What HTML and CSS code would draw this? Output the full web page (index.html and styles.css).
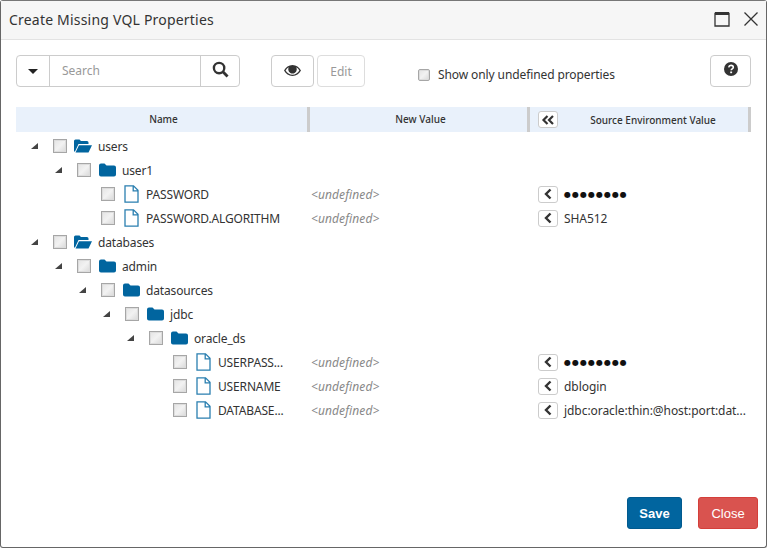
FILE: index.html
```html
<!DOCTYPE html>
<html lang="en">
<head>
  <meta charset="UTF-8">
  <title>Create Missing VQL Properties</title>
  <link rel="stylesheet" href="styles.css">
</head>
<body>
  <svg class="defs" width="0" height="0">
    <symbol id="open" viewBox="0 0 18 14">
      <path d="M0 2a1.500 1.500 0 0 1 1.500-1.500h4l1.500 1.500h6a1.500 1.500 0 0 1 1.500 1.500v1.500h-10l-3.500 7.500h-1z"/>
      <path d="M5 6.300h13l-3.500 7.200h-13z"/>
    </symbol>
    <symbol id="closed" viewBox="0 0 17 14">
      <path d="M0 2.500a2 2 0 0 1 2-2h3.500l2 2h7.500a2 2 0 0 1 2 2v7a2 2 0 0 1-2 2h-13a2 2 0 0 1-2-2z"/>
    </symbol>
    <symbol id="file" viewBox="0 0 15 18">
      <path d="M1 .8h8.500l4.500 4.500v11.900h-13zM9.200 .8v5h4.800" fill="none" stroke="currentColor" stroke-width="1.300"/>
    </symbol>
    <symbol id="left" viewBox="0 0 10 12">
      <path d="M7.500 1.500l-4.500 4.500 4.500 4.500" fill="none" stroke="currentColor" stroke-width="2.400"/>
    </symbol>
  </svg>

  <div class="dialog">
    <header class="titlebar">
      <span class="title">Create Missing VQL Properties</span>
      <span class="window-btns">
        <svg width="16" height="16" viewBox="0 0 16 16"><path d="M1 2.500h14v12.500h-14z" fill="none" stroke="#333" stroke-width="1.300"/><path d="M1 1h14v3h-14z" fill="#333"/></svg>
        <svg width="16" height="16" viewBox="0 0 16 16"><path d="M1.500 1.500l13 13M14.500 1.500l-13 13" stroke="#333" stroke-width="1.300"/></svg>
      </span>
    </header>

    <div class="toolbar">
      <div class="search">
        <button class="search-menu"><span class="caret"></span></button>
        <span class="search-input">Search</span>
        <button class="search-go">
          <svg width="17" height="17" viewBox="0 0 18 18"><circle cx="7.500" cy="7.500" r="5.500" fill="none" stroke="#333" stroke-width="2.500"/><path d="M11.500 11.500l5 5" stroke="#333" stroke-width="3"/></svg>
        </button>
      </div>
      <button class="btn btn-eye">
        <svg width="17" height="11" viewBox="0 0 18 12" preserveAspectRatio="none"><path d="M0 6c2-3.500 5-6 9-6s7 2.500 9 6c-2 3.500-5 6-9 6s-7-2.500-9-6zM1.700 6c1.700 2.700 4.200 4.700 7.300 4.700s5.600-2 7.300-4.700c-.9-1.500-2-2.700-3.400-3.500a4.500 4.500 0 1 1-7.800 0c-1.400.8-2.500 2-3.400 3.500z" fill="#333" fill-rule="evenodd"/><circle cx="9" cy="5" r="3.500" fill="#333"/></svg>
      </button>
      <button class="btn btn-edit">Edit</button>
      <label class="only-undefined"><span class="check small"></span>Show only undefined properties</label>
      <button class="btn btn-help">
        <svg width="14" height="14" viewBox="0 0 14 14"><circle cx="7" cy="7" r="7" fill="#333"/><path d="M4.700 5.300c.2-1.300 1.200-1.900 2.300-1.900 1.300 0 2.300.8 2.300 1.900 0 1.700-2.100 1.500-2.100 3" fill="none" stroke="#fff" stroke-width="1.600"/><path d="M6.200 9.500h1.900v1.700h-1.900z" fill="#fff"/></svg>
      </button>
    </div>

    <div class="grid-head">
      <div class="col-name">Name</div>
      <div class="col-new">New Value</div>
      <div class="col-source">
        <button class="copy-all">
          <svg width="14" height="10" viewBox="0 0 14 10"><path d="M6.500 1l-4 4 4 4M12 1l-4 4 4 4" fill="none" stroke="#333" stroke-width="2.200"/></svg>
        </button>
        <span class="source-label">Source Environment Value</span>
      </div>
    </div>

    <div class="tree">
      <div class="row depth-0">
        <div class="node"><span class="arrow"></span><span class="check"></span><svg class="folder-open"><use href="#open"/></svg><span class="label">users</span></div>
      </div>
      <div class="row depth-1">
        <div class="node"><span class="arrow"></span><span class="check"></span><svg class="folder"><use href="#closed"/></svg><span class="label">user1</span></div>
      </div>
      <div class="row depth-2">
        <div class="node leaf"><span class="check"></span><svg class="doc"><use href="#file"/></svg><span class="label">PASSWORD</span></div>
        <div class="undefined">&lt;undefined&gt;</div>
        <div class="source"><button class="copy"><svg class="chev"><use href="#left"/></svg></button><span class="secret">●●●●●●●●</span></div>
      </div>
      <div class="row depth-2">
        <div class="node leaf"><span class="check"></span><svg class="doc"><use href="#file"/></svg><span class="label">PASSWORD.ALGORITHM</span></div>
        <div class="undefined">&lt;undefined&gt;</div>
        <div class="source"><button class="copy"><svg class="chev"><use href="#left"/></svg></button><span class="value">SHA512</span></div>
      </div>
      <div class="row depth-0">
        <div class="node"><span class="arrow"></span><span class="check"></span><svg class="folder-open"><use href="#open"/></svg><span class="label">databases</span></div>
      </div>
      <div class="row depth-1">
        <div class="node"><span class="arrow"></span><span class="check"></span><svg class="folder"><use href="#closed"/></svg><span class="label">admin</span></div>
      </div>
      <div class="row depth-2">
        <div class="node"><span class="arrow"></span><span class="check"></span><svg class="folder"><use href="#closed"/></svg><span class="label">datasources</span></div>
      </div>
      <div class="row depth-3">
        <div class="node"><span class="arrow"></span><span class="check"></span><svg class="folder"><use href="#closed"/></svg><span class="label">jdbc</span></div>
      </div>
      <div class="row depth-4">
        <div class="node"><span class="arrow"></span><span class="check"></span><svg class="folder"><use href="#closed"/></svg><span class="label">oracle_ds</span></div>
      </div>
      <div class="row depth-5">
        <div class="node leaf"><span class="check"></span><svg class="doc"><use href="#file"/></svg><span class="label">USERPASS...</span></div>
        <div class="undefined">&lt;undefined&gt;</div>
        <div class="source"><button class="copy"><svg class="chev"><use href="#left"/></svg></button><span class="secret">●●●●●●●●</span></div>
      </div>
      <div class="row depth-5">
        <div class="node leaf"><span class="check"></span><svg class="doc"><use href="#file"/></svg><span class="label">USERNAME</span></div>
        <div class="undefined">&lt;undefined&gt;</div>
        <div class="source"><button class="copy"><svg class="chev"><use href="#left"/></svg></button><span class="value">dblogin</span></div>
      </div>
      <div class="row depth-5">
        <div class="node leaf"><span class="check"></span><svg class="doc"><use href="#file"/></svg><span class="label">DATABASE...</span></div>
        <div class="undefined">&lt;undefined&gt;</div>
        <div class="source"><button class="copy"><svg class="chev"><use href="#left"/></svg></button><span class="value">jdbc:oracle:thin:@host:port:dat...</span></div>
      </div>
    </div>

    <footer class="actions">
      <button class="action save">Save</button>
      <button class="action close">Close</button>
    </footer>
  </div>
</body>
</html>
```

FILE: styles.css
```css
html, body {
  margin: 0;
  height: 100%;
  background: #fff;
}

body {
  font-family: "Noto Sans", sans-serif;
  font-size: 12px;
  color: #333;
  overflow: hidden;
}

.defs {
  position: absolute;
}

button {
  font: inherit;
  color: inherit;
  background: #fff;
  padding: 0;
}

.dialog {
  box-sizing: border-box;
  width: 767px;
  height: 548px;
  display: flex;
  flex-direction: column;
  border: 1px solid #666;
  border-top-color: #777;
  border-radius: 3px;
}

.titlebar {
  flex: none;
  box-sizing: border-box;
  height: 39px;
  display: flex;
  align-items: center;
  justify-content: space-between;
  padding: 0 7px 2px 8px;
  background: #f6f6f6;
  border-bottom: 1px solid #e3e3e3;
}

.title {
  font-size: 14px;
  letter-spacing: 0.2px;
}

.window-btns {
  display: flex;
  gap: 13px;
}

.toolbar {
  flex: none;
  display: flex;
  align-items: flex-start;
  height: 32px;
  padding: 15px 15px 0;
}

.search {
  box-sizing: border-box;
  display: flex;
  width: 224px;
  height: 32px;
  border: 1px solid #ccc;
  border-radius: 4px;
}

.search-menu {
  width: 33px;
  padding-bottom: 2px;
  border: 0;
  border-right: 1px solid #ccc;
  background: none;
}

.caret {
  display: inline-block;
  border: 5px solid transparent;
  border-top: 5px solid #222;
  border-bottom: 0;
  vertical-align: middle;
}

.search-input {
  flex: 1;
  padding-left: 12px;
  line-height: 30px;
  color: #999;
}

.search-go {
  width: 39px;
  border: 0;
  border-left: 1px solid #ccc;
  background: none;
}

.btn {
  box-sizing: border-box;
  height: 32px;
  border: 1px solid #ccc;
  border-radius: 4px;
}

.btn-eye {
  width: 43px;
  margin-left: 31px;
}

.btn-edit {
  width: 48px;
  margin-left: 3px;
  color: #999;
  border-color: #ddd;
}

.only-undefined {
  display: flex;
  align-items: center;
  gap: 8px;
  margin: 12px 0 0 53px;
  width: 292px;
  line-height: 16px;
  letter-spacing: -0.1px;
}

.btn-help {
  width: 41px;
}

.check {
  flex: none;
  box-sizing: border-box;
  display: block;
  width: 14px;
  height: 14px;
  border: 1px solid #a6a6a6;
  box-shadow: inset 0 0 0 1px #ddd;
  background: linear-gradient(135deg, #e4e4e4, #f2f2f2 50%, #d8d8d8);
}

.check.small {
  width: 12px;
  height: 12px;
  border-radius: 2px;
}

.grid-head {
  flex: none;
  display: grid;
  grid-template-columns: 294px 220px 221px;
  height: 25px;
  margin: 20px 0 0 15px;
  width: 735px;
  background: #e9f1fb;
  line-height: 24px;
  font-size: 10px;
  font-weight: 500;
  text-align: center;
}

.col-name, .col-new, .col-source {
  box-sizing: border-box;
  border-right: 3px solid #ccc;
  background-clip: padding-box;
}

.col-name, .col-new {
  padding-left: 4px;
}

.col-source {
  display: flex;
  align-items: center;
  padding-left: 8px;
}

.copy-all {
  box-sizing: border-box;
  width: 20px;
  height: 17px;
  line-height: 0;
  border: 1px solid #ccc;
  border-radius: 3px;
}

.source-label {
  flex: 1;
  white-space: nowrap;
}

.tree {
  flex: 1;
  padding: 2px 0 0 15px;
}

.row {
  display: grid;
  grid-template-columns: 293px 220px 1fr;
  height: 24px;
  align-items: center;
  width: 734px;
}

.node {
  display: flex;
  align-items: center;
  min-width: 0;
}

.depth-0 .node { padding-left: 15px; }
.depth-1 .node { padding-left: 39px; }
.depth-2 .node { padding-left: 63px; }
.depth-3 .node { padding-left: 87px; }
.depth-4 .node { padding-left: 111px; }
.depth-5 .node { padding-left: 135px; }

.leaf {
  margin-left: 22px;
}

.arrow {
  flex: none;
  width: 0;
  height: 0;
  margin-right: 15px;
  border-style: solid;
  border-width: 0 0 6px 7px;
  border-color: transparent transparent #444 transparent;
}

.folder-open, .folder, .doc {
  flex: none;
  display: block;
}

.folder-open {
  width: 18px;
  height: 14px;
  margin: 0 6px 0 7px;
  fill: #01659f;
}

.folder {
  width: 17px;
  height: 14px;
  margin: 0 6px 0 8px;
  fill: #01659f;
}

.doc {
  width: 15px;
  height: 18px;
  margin: 0 7px 0 9px;
  color: #2a7fb0;
}

.label {
  white-space: nowrap;
  letter-spacing: -0.15px;
}

.undefined {
  padding-left: 2px;
  font-style: italic;
  color: #888;
  letter-spacing: 0.1px;
}

.source {
  display: flex;
  align-items: center;
  gap: 6px;
  padding-left: 9px;
  min-width: 0;
}

.copy {
  flex: none;
  box-sizing: border-box;
  width: 20px;
  height: 17px;
  border: 1px solid #ccc;
  border-radius: 3px;
  line-height: 0;
}

.chev {
  width: 10px;
  height: 12px;
  color: #333;
}

.value {
  white-space: nowrap;
  letter-spacing: -0.06px;
}

.secret {
  color: #111;
  font-family: "DejaVu Sans", sans-serif;
  font-size: 8px;
  letter-spacing: 1px;
}

.actions {
  flex: none;
  display: flex;
  justify-content: flex-end;
  gap: 16px;
  padding: 0 8px 18px 0;
}

.action {
  box-sizing: border-box;
  height: 32px;
  border: 1px solid;
  border-radius: 3px;
  color: #fff;
  font-family: "Liberation Sans", sans-serif;
  font-size: 13px;
}

.save {
  width: 55px;
  font-weight: bold;
  background: #01659f;
  border-color: #015a8e;
}

.close {
  width: 60px;
  background: #d9534f;
  border-color: #d43f3a;
}
```
